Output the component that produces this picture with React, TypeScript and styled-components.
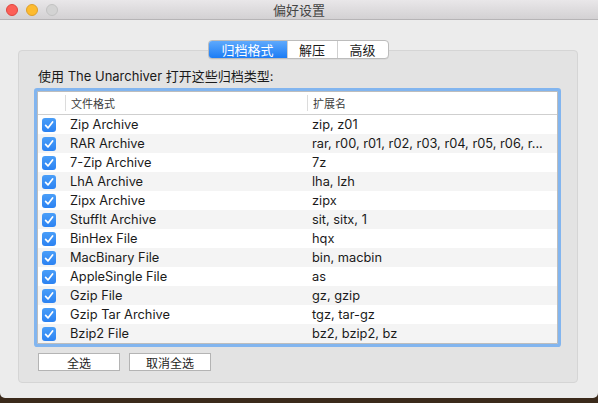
import React from "react";
import styled, { createGlobalStyle } from "styled-components";

const GlobalStyle = createGlobalStyle`
  html, body { margin: 0; padding: 0; }
  body {
    background: #3b2a1b;
    font-family: Inter, "Noto Sans CJK SC", sans-serif;
    -webkit-font-smoothing: antialiased;
  }
`;

const Window = styled.div`
  width: 598px;
  height: 398px;
  background: #ececec;
  border-radius: 0 0 5px 5px;
  display: flex;
  flex-direction: column;
  overflow: hidden;
`;

const TitleBar = styled.div`
  height: 19px;
  border-bottom: 1px solid #b6b4b6;
  background: linear-gradient(#e9e7e9, #d3d1d3);
  display: grid;
  grid-template-columns: 1fr auto 1fr;
  align-items: center;
`;

const Lights = styled.div`
  display: flex;
  gap: 8px;
  padding-left: 6px;
`;

const Light = styled.span<{ $fill: string; $edge: string }>`
  width: 12px;
  height: 12px;
  box-sizing: border-box;
  border-radius: 50%;
  background: ${(p) => p.$fill};
  border: 1px solid ${(p) => p.$edge};
`;

const Title = styled.div`
  font-family: "Noto Sans CJK SC", sans-serif;
  font-size: 13px;
  color: #444;
  line-height: 19px;
`;

const Body = styled.div`
  padding: 20px 20px 0 18px;
  display: flex;
  flex-direction: column;
`;

const TabsRow = styled.div`
  display: flex;
  justify-content: center;
  position: relative;
  z-index: 1;
`;

const Tabs = styled.div`
  display: flex;
  height: 19px;
  box-sizing: border-box;
  border: 1px solid #bcbcbc;
  border-radius: 4px;
  background: #fff;
  overflow: hidden;
  box-shadow: 0 0.5px 0.5px rgba(0, 0, 0, 0.08);
`;

const Tab = styled.div<{ $active?: boolean; $w: number }>`
  width: ${(p) => p.$w}px;
  display: flex;
  align-items: center;
  justify-content: center;
  font-family: "Noto Sans CJK SC", sans-serif;
  font-size: 13px;
  line-height: 17px;
  color: ${(p) => (p.$active ? "#fff" : "#1a1a1a")};
  background: ${(p) =>
    p.$active ? "linear-gradient(#5ea9fc, #1b7cf5)" : "transparent"};
  & + & {
    border-left: 1px solid #d0d0d0;
  }
`;

const Panel = styled.div`
  margin-top: -9px;
  width: 560px;
  height: 333px;
  box-sizing: border-box;
  border: 1px solid #d5d5d5;
  border-radius: 4px;
  background: #e3e3e3;
  padding: 17px 0 0 18px;
  display: flex;
  flex-direction: column;
`;

const Label = styled.div`
  font-size: 13px;
  line-height: 16px;
  color: #1a1a1a;
  margin-left: 1px;
`;

const Frame = styled.div`
  margin-top: 7px;
  width: 521px;
  box-sizing: border-box;
  border: 1px solid #bdbdbd;
  box-shadow: 0 0 0 3px #82b5ef;
  border-radius: 1px;
  background: #fff;
`;

const HeaderRow = styled.div`
  display: grid;
  grid-template-columns: 27px 242px 1fr;
  height: 22px;
  border-bottom: 1px solid #cfcfcf;
  align-items: center;
`;

const HeaderCell = styled.div<{ $divider?: boolean }>`
  height: 16px;
  display: flex;
  align-items: center;
  padding-left: 5px;
  border-left: ${(p) => (p.$divider ? "1px solid #dcdcdc" : "none")};
  font-family: "Noto Sans CJK SC", sans-serif;
  font-size: 11px;
  color: #3c3c3c;
`;

const Row = styled.div<{ $alt: boolean }>`
  display: grid;
  grid-template-columns: 27px 242px 1fr;
  height: 19px;
  align-items: center;
  background: ${(p) => (p.$alt ? "#f4f4f4" : "#fff")};
`;

const CheckCell = styled.div`
  padding-left: 4px;
  display: flex;
  align-items: center;
`;

const Cell = styled.div`
  padding-left: 5px;
  font-size: 12.8px;
  color: #1a1a1a;
  white-space: nowrap;
`;

const Buttons = styled.div`
  margin-top: 9px;
  margin-left: 1px;
  display: flex;
  gap: 9px;
`;

const Button = styled.div`
  width: 82px;
  height: 18px;
  box-sizing: border-box;
  border: 1px solid #b4b4b4;
  background: #fff;
  display: flex;
  align-items: center;
  justify-content: center;
  font-family: "Noto Sans CJK SC", sans-serif;
  font-size: 12px;
  color: #1d1d1d;
`;

const Check = () => (
  <svg width="14" height="14" viewBox="0 0 14 14">
    <defs>
      <linearGradient id="cb" x1="0" y1="0" x2="0" y2="1">
        <stop offset="0" stopColor="#4a9ef8" />
        <stop offset="1" stopColor="#2b82f2" />
      </linearGradient>
    </defs>
    <rect x="0" y="0" width="14" height="14" rx="3" fill="url(#cb)" />
    <path
      d="M3.6 7.4 L6 9.9 L10.6 3.9"
      fill="none"
      stroke="#fff"
      strokeWidth="1.7"
      strokeLinecap="round"
      strokeLinejoin="round"
    />
  </svg>
);

const rows: [string, string][] = [
  ["Zip Archive", "zip, z01"],
  ["RAR Archive", "rar, r00, r01, r02, r03, r04, r05, r06, r..."],
  ["7-Zip Archive", "7z"],
  ["LhA Archive", "lha, lzh"],
  ["Zipx Archive", "zipx"],
  ["StuffIt Archive", "sit, sitx, 1"],
  ["BinHex File", "hqx"],
  ["MacBinary File", "bin, macbin"],
  ["AppleSingle File", "as"],
  ["Gzip File", "gz, gzip"],
  ["Gzip Tar Archive", "tgz, tar-gz"],
  ["Bzip2 File", "bz2, bzip2, bz"],
];

export default function App() {
  return (
    <>
      <GlobalStyle />
      <Window>
        <TitleBar>
          <Lights>
            <Light $fill="#fc5f57" $edge="#df4640" />
            <Light $fill="#fdbb2f" $edge="#dea02a" />
            <Light $fill="#d3d3d3" $edge="#c2c2c2" />
          </Lights>
          <Title>偏好设置</Title>
          <div />
        </TitleBar>
        <Body>
          <TabsRow>
            <Tabs>
              <Tab $active $w={78}>归档格式</Tab>
              <Tab $w={49}>解压</Tab>
              <Tab $w={50}>高级</Tab>
            </Tabs>
          </TabsRow>
          <Panel>
            <Label>使用 The Unarchiver 打开这些归档类型:</Label>
            <Frame>
              <HeaderRow>
                <HeaderCell />
                <HeaderCell $divider>文件格式</HeaderCell>
                <HeaderCell $divider>扩展名</HeaderCell>
              </HeaderRow>
              {rows.map(([name, ext], i) => (
                <Row key={name} $alt={i % 2 === 1}>
                  <CheckCell>
                    <Check />
                  </CheckCell>
                  <Cell>{name}</Cell>
                  <Cell>{ext}</Cell>
                </Row>
              ))}
            </Frame>
            <Buttons>
              <Button>全选</Button>
              <Button>取消全选</Button>
            </Buttons>
          </Panel>
        </Body>
      </Window>
    </>
  );
}
